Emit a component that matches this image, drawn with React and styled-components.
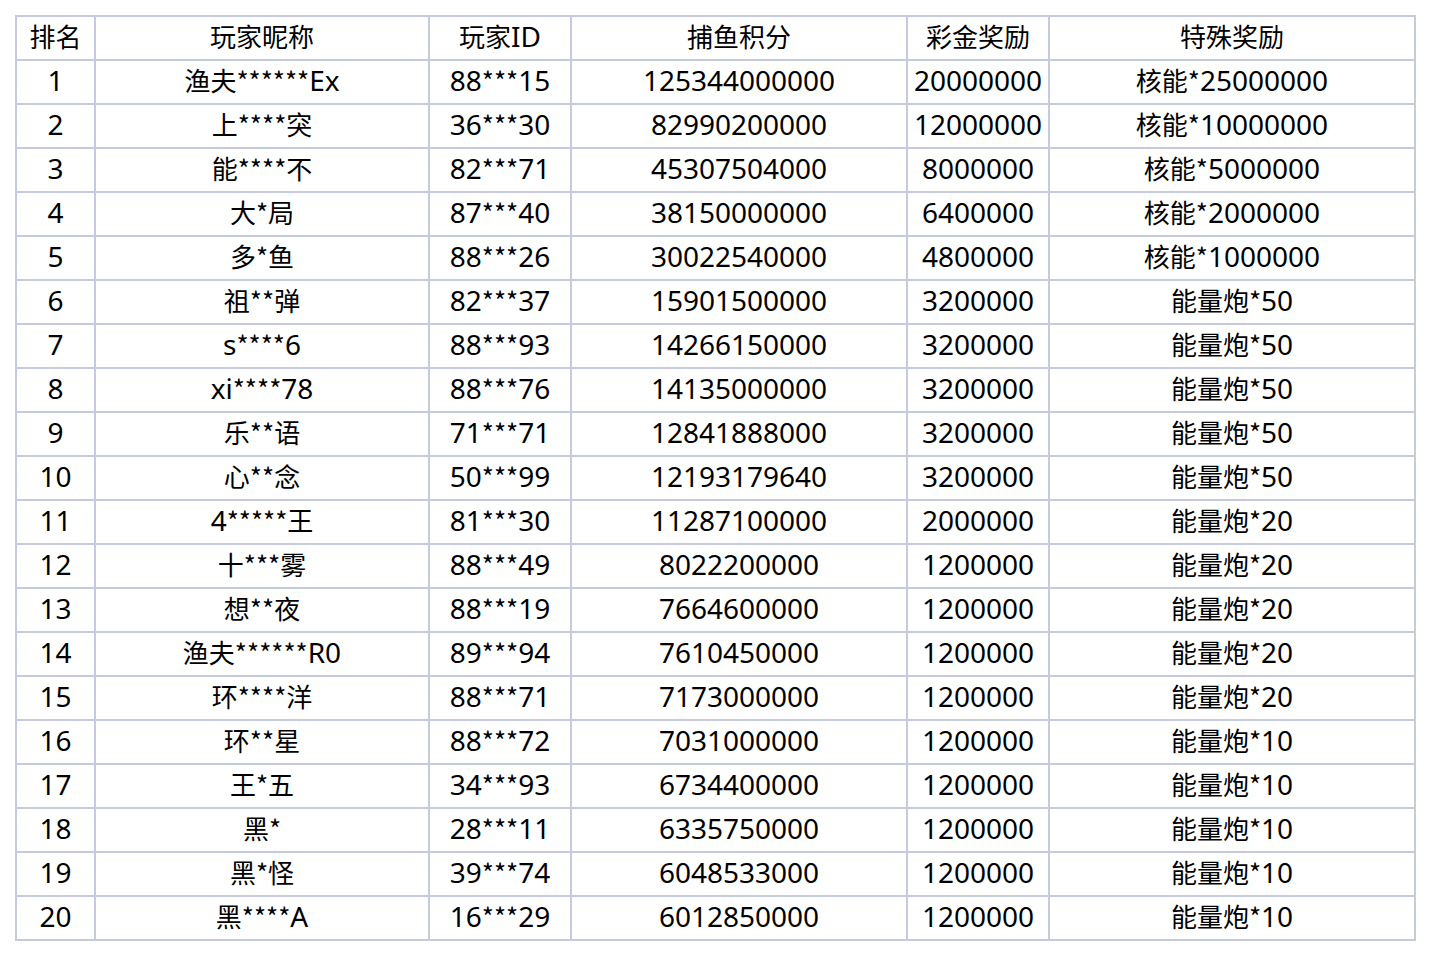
import React from 'react';
import styled, {createGlobalStyle} from "styled-components";

const columns = ["排名", "玩家昵称", "玩家ID", "捕鱼积分", "彩金奖励", "特殊奖励"];

const rows = [
    ["1", "渔夫******Ex", "88***15", "125344000000", "20000000", "核能*25000000"],
    ["2", "上****突", "36***30", "82990200000", "12000000", "核能*10000000"],
    ["3", "能****不", "82***71", "45307504000", "8000000", "核能*5000000"],
    ["4", "大*局", "87***40", "38150000000", "6400000", "核能*2000000"],
    ["5", "多*鱼", "88***26", "30022540000", "4800000", "核能*1000000"],
    ["6", "祖**弹", "82***37", "15901500000", "3200000", "能量炮*50"],
    ["7", "s****6", "88***93", "14266150000", "3200000", "能量炮*50"],
    ["8", "xi****78", "88***76", "14135000000", "3200000", "能量炮*50"],
    ["9", "乐**语", "71***71", "12841888000", "3200000", "能量炮*50"],
    ["10", "心**念", "50***99", "12193179640", "3200000", "能量炮*50"],
    ["11", "4*****王", "81***30", "11287100000", "2000000", "能量炮*20"],
    ["12", "十***雾", "88***49", "8022200000", "1200000", "能量炮*20"],
    ["13", "想**夜", "88***19", "7664600000", "1200000", "能量炮*20"],
    ["14", "渔夫******R0", "89***94", "7610450000", "1200000", "能量炮*20"],
    ["15", "环****洋", "88***71", "7173000000", "1200000", "能量炮*20"],
    ["16", "环**星", "88***72", "7031000000", "1200000", "能量炮*10"],
    ["17", "王*五", "34***93", "6734400000", "1200000", "能量炮*10"],
    ["18", "黑*", "28***11", "6335750000", "1200000", "能量炮*10"],
    ["19", "黑*怪", "39***74", "6048533000", "1200000", "能量炮*10"],
    ["20", "黑****A", "16***29", "6012850000", "1200000", "能量炮*10"],
];

// latin letters and digits get a wider face than the CJK one
function CellText({value}) {
    const parts = value.split(/([0-9A-Za-z]+)/).filter(Boolean);
    return (
        <Text>
            {parts.map((part, i) => /[0-9A-Za-z]/.test(part)
                ? <Latin key={i}>{part}</Latin>
                : <span key={i}>{part}</span>
            )}
        </Text>
    )
}

export default function App() {
    return (
        <>
            <GlobalStyle/>
            <Page>
                <RankTable>
                    {columns.map(title => (
                        <Cell key={title}><CellText value={title}/></Cell>
                    ))}
                    {rows.map(row => row.map((value, i) => (
                        <Cell key={row[0] + "-" + i}><CellText value={value}/></Cell>
                    )))}
                </RankTable>
            </Page>
        </>
    )
}

const GlobalStyle = createGlobalStyle`
    body {
        margin: 0;
        background: white;
        font-family: "Noto Sans CJK SC", "Noto Sans", sans-serif;
    }
`;

const Page = styled.div`
    padding: 15px;
`;

const RankTable = styled.div`
    display: grid;
    grid-template-columns: 77px 332px 140px 334px 140px 364px;
    grid-auto-rows: 42px;
    gap: 2px;
    padding: 2px;
    width: max-content;
    background: #c5cbdc;
`;

const Cell = styled.div`
    background: white;
    display: flex;
    align-items: center;
    justify-content: center;
    padding-bottom: 5px;
    box-sizing: border-box;
    color: #000;
    white-space: nowrap;
`;

const Text = styled.span`
    font-size: 26px;
    line-height: 1;
`;

const Latin = styled.span`
    font-family: "Noto Sans", sans-serif;
    font-size: 28px;
`;
